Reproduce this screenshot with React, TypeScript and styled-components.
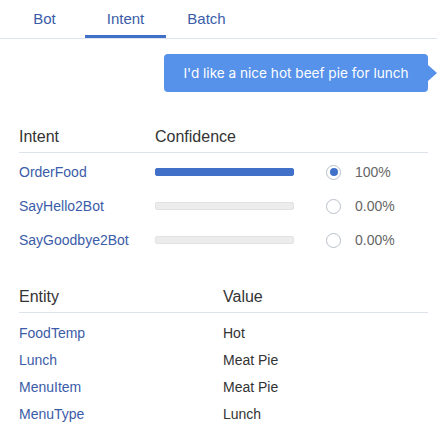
import React from "react";
import styled, { createGlobalStyle } from "styled-components";

const Global = createGlobalStyle`
  html, body { margin: 0; padding: 0; background: #fff; }
  body { font-family: "Liberation Sans", Arial, sans-serif; color: #333; }
  * { box-sizing: border-box; }
`;

const Page = styled.div`
  width: 439px;
  height: 427px;
  overflow: hidden;
`;

const TabBar = styled.div`
  display: flex;
  width: 437px;
  height: 39px;
  padding-left: 4px;
  border-bottom: 1px solid #dde3ec;
`;

const Tab = styled.div<{ $active?: boolean }>`
  width: 81px;
  height: 38px;
  display: flex;
  align-items: center;
  justify-content: center;
  padding-top: 2px;
  font-size: 15px;
  color: #3b5ca8;
  border-bottom: 3px solid ${(p) => (p.$active ? "#4170c8" : "transparent")};
`;

const Content = styled.div`
  padding: 0 11px 0 19px;
`;

const BubbleRow = styled.div`
  display: flex;
  justify-content: flex-end;
  margin-top: 15px;
`;

const Bubble = styled.div`
  position: relative;
  width: 264px;
  height: 38px;
  border-radius: 4px;
  background: #5691ea;
  color: #fff;
  font-family: Inter, "Liberation Sans", sans-serif;
  font-size: 13.6px;
  display: flex;
  align-items: center;
  justify-content: center;
  &::after {
    content: "";
    position: absolute;
    right: -9px;
    top: 11px;
    border-top: 8px solid transparent;
    border-bottom: 8px solid transparent;
    border-left: 9px solid #5691ea;
  }
`;

const Table = styled.div<{ $mt: number }>`
  margin-top: ${(p) => p.$mt}px;
`;

const HeadRow = styled.div<{ $first: number }>`
  display: grid;
  grid-template-columns: ${(p) => p.$first}px 1fr;
  height: 32px;
  align-items: center;
  border-bottom: 1px solid #dde3ec;
  font-size: 16px;
  color: #333;
`;

const Body = styled.div<{ $pt: number }>`
  padding-top: ${(p) => p.$pt}px;
`;

const IntentRow = styled.div`
  display: grid;
  grid-template-columns: 136px 139px 32px 15px 14px auto;
  height: 34px;
  align-items: center;
  font-size: 14px;
`;

const Name = styled.span`
  color: #3b5ca8;
`;

const Bar = styled.div<{ $filled: boolean }>`
  height: 8px;
  border-radius: 2px;
  background: ${(p) => (p.$filled ? "#4170c8" : "#ececec")};
  border: 1px solid ${(p) => (p.$filled ? "#4170c8" : "#e2e2e2")};
`;

const Radio = styled.div<{ $checked: boolean }>`
  grid-column: 4;
  width: 15px;
  height: 15px;
  border-radius: 50%;
  border: 1px solid #b9bfca;
  display: flex;
  align-items: center;
  justify-content: center;
  &::after {
    content: "";
    width: 8px;
    height: 8px;
    border-radius: 50%;
    background: ${(p) => (p.$checked ? "#4170c8" : "transparent")};
  }
`;

const Pct = styled.span`
  grid-column: 6;
  color: #666;
`;

const EntityRow = styled.div`
  display: grid;
  grid-template-columns: 204px 1fr;
  height: 27px;
  align-items: center;
  font-size: 14px;
`;

const Value = styled.span`
  color: #333;
`;

const intents = [
  { name: "OrderFood", score: 1, label: "100%" },
  { name: "SayHello2Bot", score: 0, label: "0.00%" },
  { name: "SayGoodbye2Bot", score: 0, label: "0.00%" },
];

const entities = [
  { name: "FoodTemp", value: "Hot" },
  { name: "Lunch", value: "Meat Pie" },
  { name: "MenuItem", value: "Meat Pie" },
  { name: "MenuType", value: "Lunch" },
];

export default function App() {
  return (
    <Page>
      <Global />
      <TabBar>
        <Tab>Bot</Tab>
        <Tab $active>Intent</Tab>
        <Tab>Batch</Tab>
      </TabBar>
      <Content>
        <BubbleRow>
          <Bubble>I'd like a nice hot beef pie for lunch</Bubble>
        </BubbleRow>
        <Table $mt={29}>
          <HeadRow $first={136}>
            <span>Intent</span>
            <span>Confidence</span>
          </HeadRow>
          <Body $pt={2}>
            {intents.map((i) => (
              <IntentRow key={i.name}>
                <Name>{i.name}</Name>
                <Bar $filled={i.score > 0} />
                <Radio $checked={i.score > 0} />
                <Pct>{i.label}</Pct>
              </IntentRow>
            ))}
          </Body>
        </Table>
        <Table $mt={24}>
          <HeadRow $first={204}>
            <span>Entity</span>
            <span>Value</span>
          </HeadRow>
          <Body $pt={6}>
            {entities.map((e) => (
              <EntityRow key={e.name}>
                <Name>{e.name}</Name>
                <Value>{e.value}</Value>
              </EntityRow>
            ))}
          </Body>
        </Table>
      </Content>
    </Page>
  );
}
